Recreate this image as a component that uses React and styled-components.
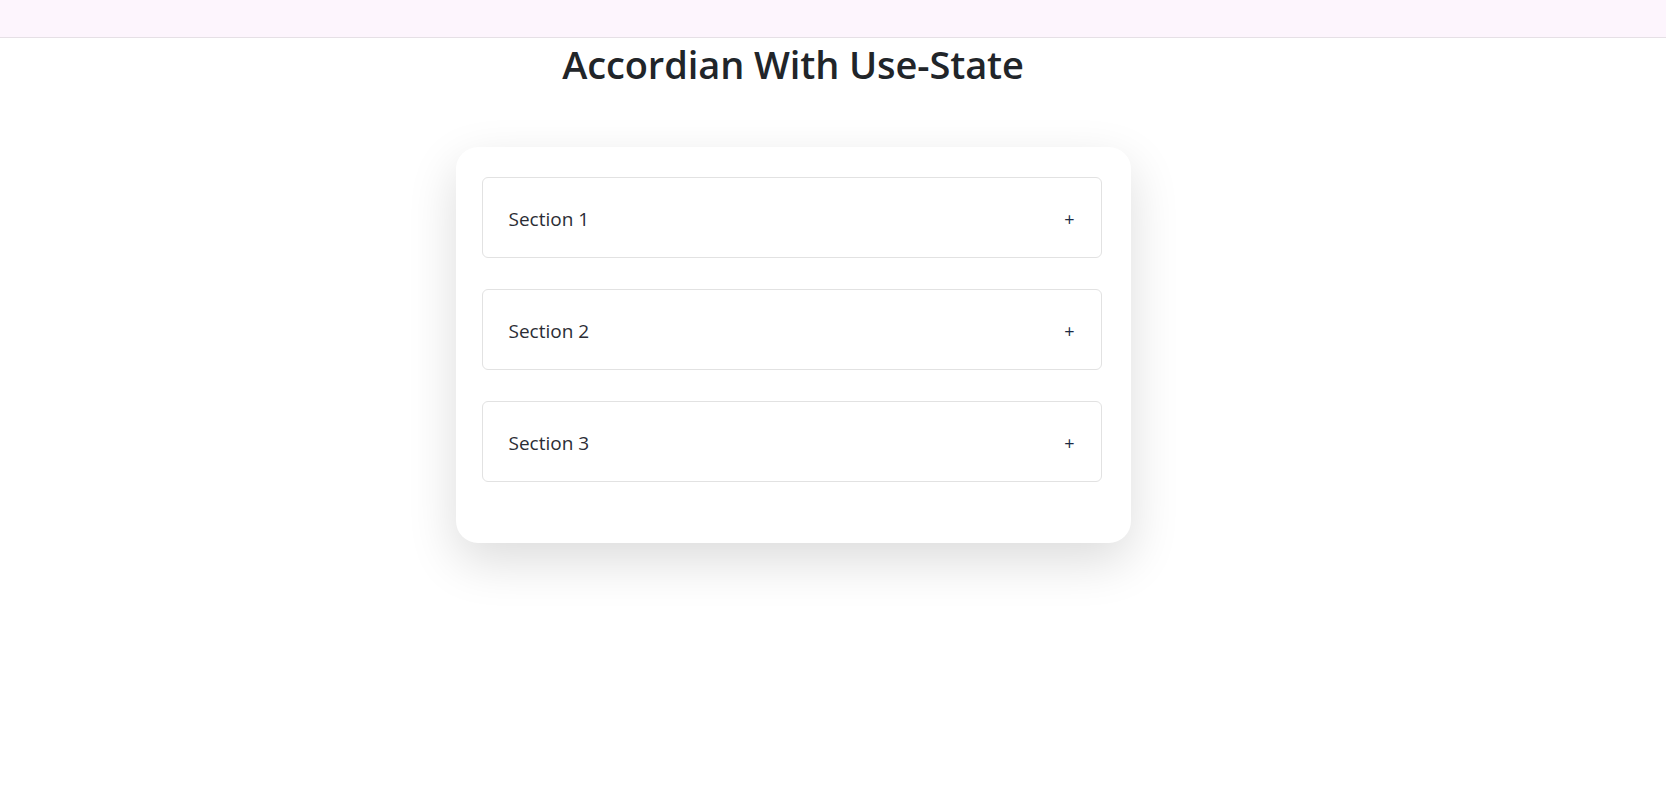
import React, { useState } from "react";
import styled, { createGlobalStyle } from "styled-components";

const GlobalStyle = createGlobalStyle`
  * { box-sizing: border-box; }
  html, body { background: #ffffff; }
  body {
    margin: 0;
    font-family: "Open Sans", "Noto Sans", Arial, sans-serif;
    color: #212529;
  }
`;

const TopBar = styled.header`
  height: 38px;
  background: #fdf5fd;
  border-bottom: 1px solid #e6e0e6;
`;

const Main = styled.main`
  width: calc(100% - 80px);
  min-height: 760px;
  padding-bottom: 120px;
  display: flex;
  flex-direction: column;
  align-items: center;
`;

const Title = styled.h1`
  margin: 4px 0 59px;
  font-size: 38px;
  line-height: 1.2;
  font-weight: 600;
  color: #212529;
  letter-spacing: -0.1px;
`;

const Card = styled.section`
  width: 675px;
  padding: 30px 29px 30px 26px;
  background: #ffffff;
  border-radius: 22px;
  box-shadow: 0 18px 50px rgba(0, 0, 0, 0.14);
`;

const Item = styled.div`
  margin-bottom: 31px;
  border: 1px solid #e2e2e2;
  border-radius: 6px;
  background: #fff;
`;

const Header = styled.button`
  width: 100%;
  height: 79px;
  display: flex;
  align-items: center;
  justify-content: space-between;
  padding: 4px 26px 0 26px;
  border: none;
  background: transparent;
  cursor: pointer;
  font-family: inherit;
  font-size: 19px;
  color: #2b2d35;
  text-align: left;
`;

const Sign = styled.span`
  font-size: 18px;
  color: #1c2a44;
`;

const Body = styled.div`
  padding: 0 26px 20px;
  font-size: 16px;
  color: #444;
`;

const sections = [
  { title: "Section 1", content: "Content for section 1." },
  { title: "Section 2", content: "Content for section 2." },
  { title: "Section 3", content: "Content for section 3." },
];

export default function App() {
  const [open, setOpen] = useState(null);
  return (
    <>
      <GlobalStyle />
      <TopBar />
      <Main>
        <Title>Accordian With Use-State</Title>
        <Card>
          {sections.map((s, i) => (
            <Item key={s.title}>
              <Header onClick={() => setOpen(open === i ? null : i)}>
                <span>{s.title}</span>
                <Sign>{open === i ? "−" : "+"}</Sign>
              </Header>
              {open === i && <Body>{s.content}</Body>}
            </Item>
          ))}
        </Card>
      </Main>
    </>
  );
}
